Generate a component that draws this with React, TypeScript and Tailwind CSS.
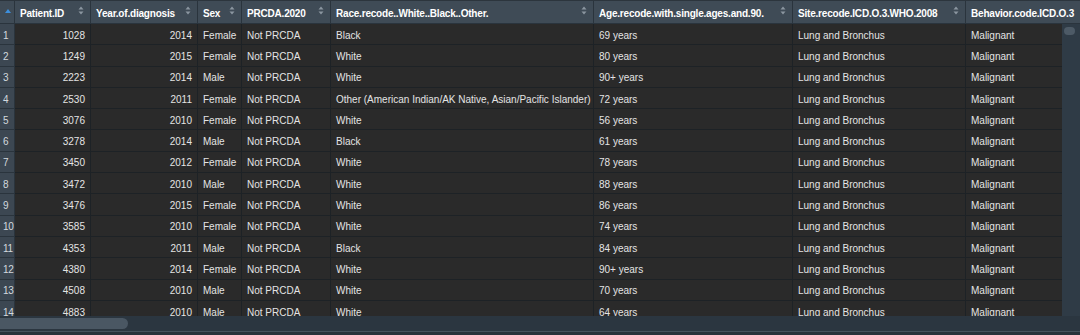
import React from "react";

type Row = {
  id: number;
  year: number;
  sex: string;
  prcda: string;
  race: string;
  age: string;
};

const rows: Row[] = [
  { id: 1028, year: 2014, sex: "Female", prcda: "Not PRCDA", race: "Black", age: "69 years" },
  { id: 1249, year: 2015, sex: "Female", prcda: "Not PRCDA", race: "White", age: "80 years" },
  { id: 2223, year: 2014, sex: "Male", prcda: "Not PRCDA", race: "White", age: "90+ years" },
  {
    id: 2530,
    year: 2011,
    sex: "Female",
    prcda: "Not PRCDA",
    race: "Other (American Indian/AK Native, Asian/Pacific Islander)",
    age: "72 years",
  },
  { id: 3076, year: 2010, sex: "Female", prcda: "Not PRCDA", race: "White", age: "56 years" },
  { id: 3278, year: 2014, sex: "Male", prcda: "Not PRCDA", race: "Black", age: "61 years" },
  { id: 3450, year: 2012, sex: "Female", prcda: "Not PRCDA", race: "White", age: "78 years" },
  { id: 3472, year: 2010, sex: "Male", prcda: "Not PRCDA", race: "White", age: "88 years" },
  { id: 3476, year: 2015, sex: "Female", prcda: "Not PRCDA", race: "White", age: "86 years" },
  { id: 3585, year: 2010, sex: "Female", prcda: "Not PRCDA", race: "White", age: "74 years" },
  { id: 4353, year: 2011, sex: "Male", prcda: "Not PRCDA", race: "Black", age: "84 years" },
  { id: 4380, year: 2014, sex: "Female", prcda: "Not PRCDA", race: "White", age: "90+ years" },
  { id: 4508, year: 2010, sex: "Male", prcda: "Not PRCDA", race: "White", age: "70 years" },
  { id: 4883, year: 2010, sex: "Male", prcda: "Not PRCDA", race: "White", age: "64 years" },
];

const headers = [
  "Patient.ID",
  "Year.of.diagnosis",
  "Sex",
  "PRCDA.2020",
  "Race.recode..White..Black..Other.",
  "Age.recode.with.single.ages.and.90.",
  "Site.recode.ICD.O.3.WHO.2008",
  "Behavior.code.ICD.O.3",
];

// last column runs past the visible area, like the real grid
const cols = "grid grid-cols-[15px_76px_107px_44px_89px_263px_199px_173px_130px]";

function SortIcon() {
  return (
    <svg width="6" height="9" viewBox="0 0 6 9" className="absolute right-[6px] top-[5px]">
      <path d="M3 0.5L5.5 3.5H0.5Z" fill="#8b96a0" />
      <path d="M3 8.5L5.5 5.5H0.5Z" fill="#8b96a0" />
    </svg>
  );
}

export default function App() {
  const cell =
    "h-[21.3px] border-b border-r border-[#1d2226] flex items-center px-[5px] pt-[2px] whitespace-nowrap overflow-hidden";

  return (
    <div
      className="w-[1080px] h-[335px] overflow-hidden bg-[#2b3640] flex flex-col text-[10px]"
      style={{ fontFamily: '"Liberation Sans", Arial, sans-serif' }}
    >
      {/* header */}
      <div className="h-[24px] shrink-0 overflow-hidden bg-[#3f4b56] border-t border-[#2c353d]">
        <div className={`${cols} h-full`}>
          <div className="relative border-r border-b border-[#2a343d]">
            <svg width="6" height="4" viewBox="0 0 6 4" className="absolute left-[5px] top-[8px]">
              <path d="M3 0L6 4H0Z" fill="#3d8fdc" />
            </svg>
          </div>
          {headers.map((h) => (
            <div
              key={h}
              className="relative flex items-center pl-[5px] pt-[2px] font-bold text-white border-r border-b border-[#2a343d] whitespace-nowrap overflow-hidden tracking-[-0.2px]"
            >
              {h}
              <SortIcon />
            </div>
          ))}
        </div>
      </div>

      <div className="flex h-[292px] shrink-0 overflow-hidden">
        {/* body */}
        <div className="w-[1062px] shrink-0 overflow-hidden">
          <div className="bg-[#2a2a2a] text-[#e4e4e4]">
            {rows.map((r, i) => (
              <div key={r.id} className={cols}>
                <div className={`${cell} bg-[#3c4752] text-[#d3d9de] !px-[3px] border-[#2a343d] tracking-[-0.3px]`}>
                  {i + 1}
                </div>
                <div className={`${cell} justify-end`}>{r.id}</div>
                <div className={`${cell} justify-end`}>{r.year}</div>
                <div className={cell}>{r.sex}</div>
                <div className={cell}>{r.prcda}</div>
                <div className={cell}>{r.race}</div>
                <div className={cell}>{r.age}</div>
                <div className={cell}>Lung and Bronchus</div>
                <div className={cell}>Malignant</div>
              </div>
            ))}
          </div>
        </div>
        {/* vertical scrollbar */}
        <div className="w-[18px] shrink-0 bg-[#2f3b46] pt-[3px] pl-[2px]">
          <div className="w-[11px] h-[8px] rounded-full bg-[#4d5a66]" />
        </div>
      </div>

      {/* horizontal scrollbar */}
      <div className="h-[15px] shrink-0 bg-[#2b3640] flex items-center">
        <div className="w-[128px] h-[11px] rounded-r-full bg-[#4a5763]" />
      </div>
      <div className="h-[1px] shrink-0 bg-[#45515c]" />
      <div className="flex-1 bg-[#27313a]" />
    </div>
  );
}
